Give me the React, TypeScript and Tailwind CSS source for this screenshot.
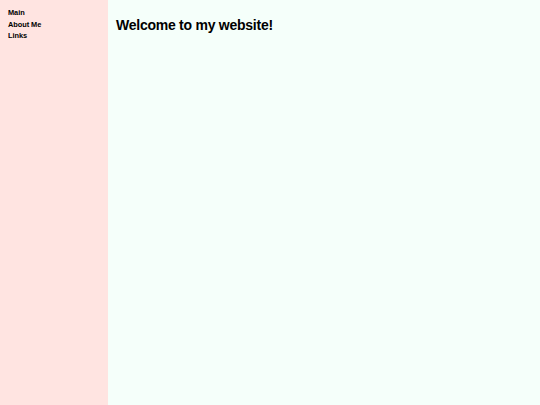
export default function App() {
  return (
    <div className="flex h-[405px] w-[540px]" style={{ fontFamily: '"Liberation Sans", Arial, sans-serif' }}>
      <nav className="w-[108px] shrink-0 bg-[#ffe4e1] px-2 pt-[7px]">
        <ul className="flex flex-col text-[7.4px] font-bold leading-[11.5px] tracking-[-0.05px] text-black">
          <li>Main</li>
          <li>About Me</li>
          <li>Links</li>
        </ul>
      </nav>
      <main className="flex-1 bg-[#f5fffa] px-2 pt-[16px]">
        <h1 className="text-[14px] font-bold leading-[18px] tracking-[-0.25px] text-black">Welcome to my website!</h1>
      </main>
    </div>
  );
}
